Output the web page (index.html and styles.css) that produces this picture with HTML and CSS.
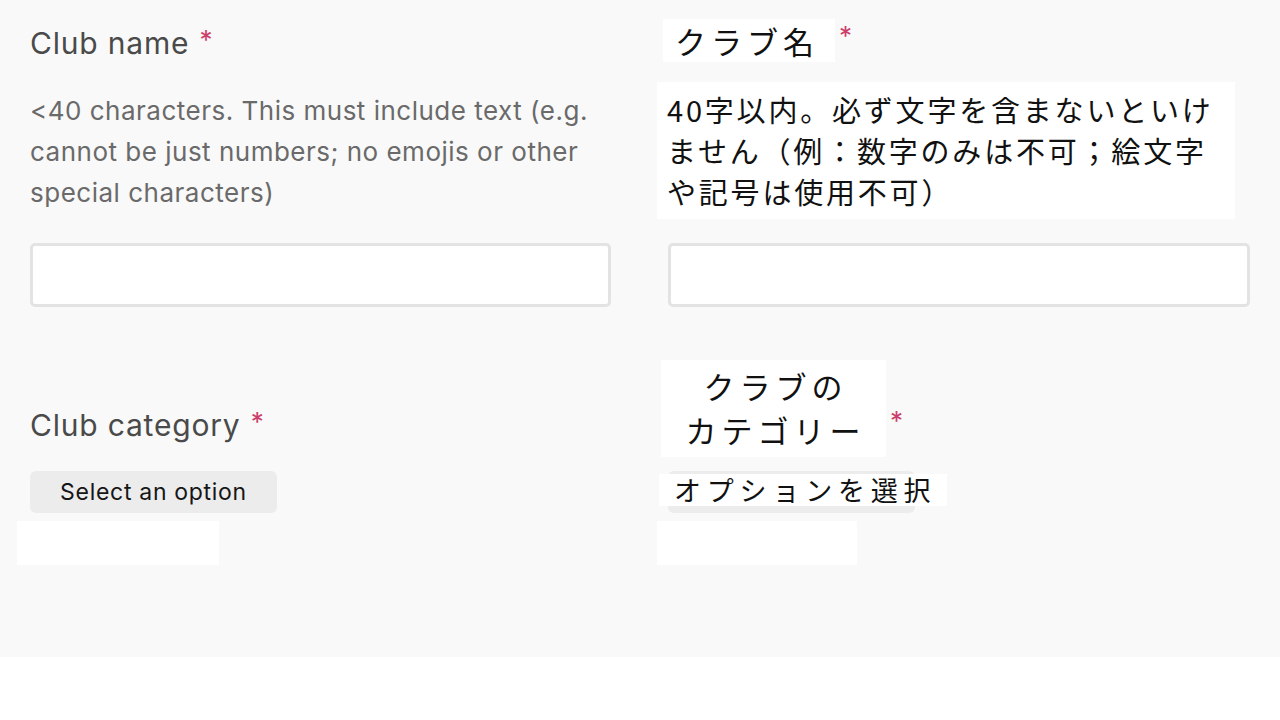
FILE: index.html
```html
<!DOCTYPE html>
<html lang="ja">
<head>
<meta charset="utf-8">
<title>Club form</title>
<link rel="stylesheet" href="styles.css">
</head>
<body>
<div class="page">
  <div class="col col-en">
    <div class="label">Club name <span class="req">*</span></div>
    <div class="help">&lt;40 characters. This must include text (e.g. cannot be just numbers; no emojis or other special characters)</div>
    <div class="input"></div>
    <div class="label label-cat">Club category <span class="req">*</span></div>
    <div class="select">Select an option</div>
    <div class="blank"></div>
  </div>
  <div class="col col-ja">
    <div class="ja-label-row">
      <div class="ja-box ja-name">クラブ名</div>
      <span class="req ja-req">*</span>
    </div>
    <div class="ja-box ja-help">40字以内。必ず文字を含まないといけ<br>ません（例：数字のみは不可；絵文字<br>や記号は使用不可）</div>
    <div class="input"></div>
    <div class="ja-label-row ja-cat-row">
      <div class="ja-box ja-cat">クラブの<br>カテゴリー</div>
      <span class="req ja-req2">*</span>
    </div>
    <div class="ja-select-wrap">
      <div class="select select-ja"></div>
      <div class="ja-box ja-select-text">オプションを選択</div>
    </div>
    <div class="blank blank-ja"></div>
  </div>
</div>
</body>
</html>
```

FILE: styles.css
```css
html, body {
  margin: 0;
  padding: 0;
  background: #ffffff;
}
body {
  font-family: Inter, Roboto, "Noto Sans", sans-serif;
}
.page {
  height: 657px;
  background: #f9f9f9;
  display: grid;
  grid-template-columns: 581px 582px;
  column-gap: 57px;
  padding: 0 30px;
  box-sizing: border-box;
  width: 1280px;
}
.col {
  display: flex;
  flex-direction: column;
  align-items: flex-start;
}
.label {
  margin-top: 18px;
  height: 44px;
  line-height: 44px;
  font-size: 30px;
  color: #4a4a4a;
  letter-spacing: 0.8px;
}
.req {
  color: #cc3e6a;
  font-size: 26px;
  vertical-align: 5px;
  margin-left: 1px;
}
.help {
  margin-top: 28px;
  font-size: 26px;
  line-height: 41px;
  color: #6a6a6a;
  width: 581px;
  letter-spacing: 0.5px;
}
.input {
  margin-top: 30px;
  width: 100%;
  height: 64px;
  box-sizing: border-box;
  border: 3px solid #e3e3e3;
  border-radius: 5px;
  background: #ffffff;
}
.label-cat {
  margin-top: 93px;
}
.select {
  margin-top: 27px;
  width: 247px;
  height: 42px;
  line-height: 42px;
  box-sizing: border-box;
  background: #ececec;
  border-radius: 6px;
  font-size: 23px;
  color: #161616;
  text-align: center;
  letter-spacing: 0.7px;
}
.blank {
  margin-top: 8px;
  margin-left: -13px;
  width: 202px;
  height: 44px;
  background: #ffffff;
}

/* Japanese column */
.ja-box {
  background: #ffffff;
  color: #111111;
  font-family: "Noto Sans CJK JP", sans-serif;
  box-sizing: border-box;
  white-space: nowrap;
}
.ja-label-row {
  display: flex;
  align-items: center;
}
.ja-name {
  margin-top: 19px;
  margin-left: -5px;
  width: 172px;
  height: 43px;
  font-size: 31px;
  line-height: 43px;
  padding-left: 12px;
  letter-spacing: 5px;
}
.ja-req {
  margin-top: 8px;
  margin-left: 4px;
}
.ja-help {
  margin-top: 20px;
  margin-left: -11px;
  width: 578px;
  height: 137px;
  padding: 7px 0 0 10px;
  font-size: 29px;
  line-height: 41px;
  letter-spacing: 2.8px;
}
.col-ja .input {
  margin-top: 24px;
}
.ja-cat-row {
  margin-top: 53px;
}
.ja-cat {
  margin-left: -7px;
  width: 225px;
  height: 97px;
  font-size: 31px;
  line-height: 44px;
  padding-top: 4px;
  padding-left: 4px;
  text-align: center;
  letter-spacing: 5px;
}
.ja-req2 {
  margin-left: 4px;
  margin-top: 24px;
}
.ja-select-wrap {
  position: relative;
  margin-top: 14px;
}
.select-ja {
  margin-top: 0;
  letter-spacing: 0;
}
.ja-select-text {
  position: absolute;
  left: -9px;
  top: 3px;
  width: 288px;
  height: 32px;
  font-size: 27px;
  line-height: 32px;
  padding-left: 15px;
  letter-spacing: 5.8px;
}
.blank-ja {
  margin-left: -11px;
  width: 200px;
}
```
